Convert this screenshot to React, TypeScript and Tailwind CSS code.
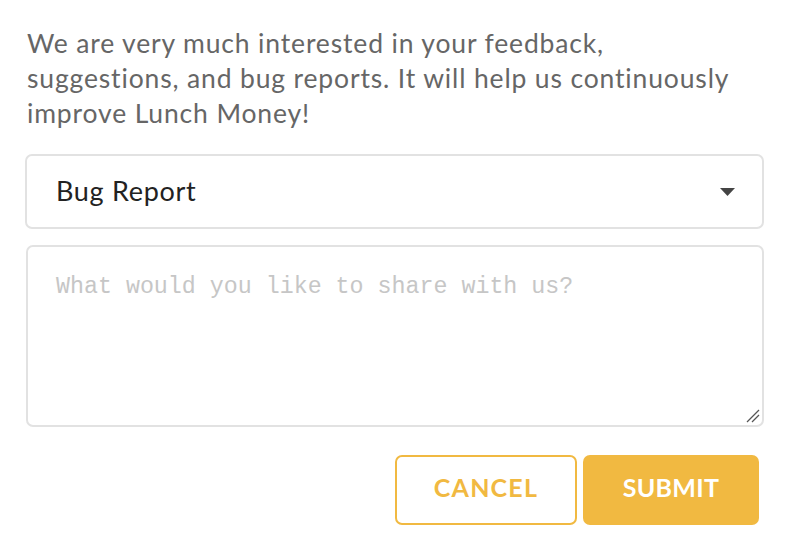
import React from "react";

export default function App() {
  return (
    <div className="w-[790px] h-[551px] bg-white px-[26px] pt-[26px]" style={{ fontFamily: "Lato, 'Noto Sans', sans-serif" }}>
      <p className="text-[26.5px] leading-[35px] text-[#666666] pl-[1px] tracking-[0.85px]">
        We are very much interested in your feedback,
        <br />
        suggestions, and bug reports. It will help us continuously
        <br />
        improve Lunch Money!
      </p>
      <div className="mt-[23px] -ml-[1px] h-[75px] rounded-[7px] border-2 border-[#e2e2e2] flex items-center justify-between pl-[29px] pr-[27px]">
        <span className="text-[27px] text-[#222222] tracking-[0.7px]">Bug Report</span>
        <svg width="15" height="8" viewBox="0 0 15 8">
          <polygon points="0,0 15,0 7.5,8" fill="#444444" />
        </svg>
      </div>
      <div className="relative mt-[16px] h-[182px] rounded-[7px] border-2 border-[#e2e2e2] pl-[28px] pt-[23px]">
        <span className="text-[23.3px] text-[#c6c6c6]" style={{ fontFamily: "'Liberation Mono', 'DejaVu Sans Mono', monospace" }}>
          What would you like to share with us?
        </span>
        <svg className="absolute right-[2px] bottom-[2px]" width="14" height="14" viewBox="0 0 14 14">
          <line x1="13" y1="1" x2="1" y2="13" stroke="#555" strokeWidth="1.3" />
          <line x1="13" y1="6" x2="6" y2="13" stroke="#555" strokeWidth="1.3" />
        </svg>
      </div>
      <div className="mt-[28px] flex justify-end gap-[6px] pr-[5px]">
        <button className="w-[182px] h-[70px] rounded-[7px] border-2 border-[#f1b941] bg-white text-[#f1b941] text-[25px] font-bold tracking-[1.2px] pb-[5px]">
          CANCEL
        </button>
        <button className="w-[176px] h-[70px] rounded-[7px] bg-[#f1b941] text-white text-[25px] font-bold tracking-[0.3px] pb-[5px]">
          SUBMIT
        </button>
      </div>
    </div>
  );
}
